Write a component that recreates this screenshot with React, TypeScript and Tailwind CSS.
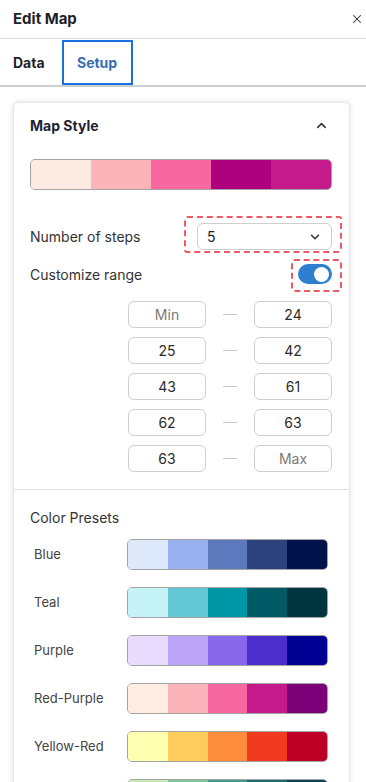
import React from 'react';
import { X, ChevronUp, ChevronDown } from 'lucide-react';

const mapStyle = ['#fdeae1', '#fbb4b9', '#f768a1', '#ae017e', '#c51b8a'];

const presets: { name: string; colors: string[] }[] = [
  { name: 'Blue', colors: ['#dde9fb', '#98b0ee', '#5c79bd', '#2c437f', '#01134b'] },
  { name: 'Teal', colors: ['#c6f3f7', '#63c7d4', '#0097a7', '#005a66', '#00343f'] },
  { name: 'Purple', colors: ['#e9dbfd', '#bba3f5', '#8768ea', '#4b2ecb', '#000093'] },
  { name: 'Red-Purple', colors: ['#feebe2', '#fbb4b9', '#f768a1', '#c51b8a', '#7a0177'] },
  { name: 'Yellow-Red', colors: ['#ffffb2', '#fecc5c', '#fd8d3c', '#f03b20', '#bd0026'] },
  { name: 'Yellow-Green', colors: ['#c7e9b4', '#7fc79a', '#41998a', '#1d6b6e', '#0c3f4f'] },
];

const ranges: [string, string][] = [
  ['Min', '24'],
  ['25', '42'],
  ['43', '61'],
  ['62', '63'],
  ['63', 'Max'],
];

function ColorBar({ colors, className }: { colors: string[]; className: string }) {
  return (
    <div className={`flex overflow-hidden rounded-[5px] border border-[#a3a3a3] ${className}`}>
      {colors.map((c, i) => (
        <div key={i} className="flex-1" style={{ backgroundColor: c }} />
      ))}
    </div>
  );
}

function RangeInput({ value }: { value: string }) {
  const placeholder = value === 'Min' || value === 'Max';
  return (
    <div
      className={`flex h-[27px] w-[78px] items-center justify-center rounded-[6px] border border-[#cfcfcf] text-[14px] ${
        placeholder ? 'text-[#7a7a7a]' : 'text-[#2b2b2b]'
      }`}
    >
      {value}
    </div>
  );
}

export default function App() {
  return (
    <div
      className="relative h-[782px] w-[366px] overflow-hidden bg-white text-[#2a2a35]"
      style={{ fontFamily: 'Inter, "Noto Sans", sans-serif' }}
    >
      {/* header */}
      <div className="flex h-[39px] items-center justify-between border-b border-[#dcdcdc] pl-[13px] pr-[2px]">
        <span className="text-[15px] font-bold text-[#1f1f28]">Edit Map</span>
        <X size={14} strokeWidth={1.8} className="text-[#333]" />
      </div>

      {/* tabs */}
      <div className="flex h-[48px] items-stretch border-b-2 border-[#cfcfcf] pl-[13px]">
        <div className="flex items-center pr-[17px] text-[14px] font-bold text-[#1f1f28]">Data</div>
        <div className="mt-[1px] flex w-[71px] items-center justify-center border-2 border-[#1a72e0] text-[14px] font-bold text-[#356fb5]">
          Setup
        </div>
      </div>

      {/* content */}
      <div className="flex h-[700px]">
        <div className="flex-1 pl-[13px] pr-[14px] pt-[15px]">
          <div className="rounded-[5px] border border-[#e6e6e6] bg-white shadow-[0_0_5px_rgba(0,0,0,0.12)]">
            {/* map style */}
            <div className="relative border-b border-[#e2e2e2] pb-[17px] pl-[16px] pr-[17px] pt-[12px]">
              <div className="flex h-[20px] items-center justify-between">
                <span className="text-[14px] font-bold text-[#1f1f35]">Map Style</span>
                <ChevronUp size={15} strokeWidth={2.4} className="mr-[3px] text-[#333]" />
              </div>
              <ColorBar colors={mapStyle} className="mt-[24px] h-[31px]" />

              <div className="mt-[33px] flex h-[27px] items-center justify-between">
                <span className="text-[14px] text-[#333]">Number of steps</span>
                <div className="flex h-[27px] w-[135px] items-center justify-between rounded-[6px] border border-[#cfcfcf] pl-[9px] pr-[9px] text-[14px] text-[#222]">
                  <span>5</span>
                  <ChevronDown size={14} strokeWidth={2.6} className="text-[#333]" />
                </div>
              </div>

              <div className="mt-[14px] flex h-[20px] items-center justify-between">
                <span className="text-[14px] text-[#333]">Customize range</span>
                <div className="flex h-[20px] w-[34px] items-center justify-end rounded-full bg-[#2f7fd0] pr-[3px]">
                  <div className="h-[15px] w-[15px] rounded-full bg-white" />
                </div>
              </div>

              <div className="mt-[17px] flex flex-col gap-[9px] pl-[98px]">
                {ranges.map(([a, b], i) => (
                  <div key={i} className="flex items-center">
                    <RangeInput value={a} />
                    <div className="mx-[17px] h-px w-[14px] bg-[#c8c8c8]" />
                    <RangeInput value={b} />
                  </div>
                ))}
              </div>

              {/* annotations */}
              <div className="pointer-events-none absolute left-[170px] top-[113px] h-[37px] w-[158px] rounded-[3px] border-2 border-dashed border-[#ec5a68]" />
              <div className="pointer-events-none absolute left-[277px] top-[156px] h-[33px] w-[51px] rounded-[3px] border-2 border-dashed border-[#ec5a68]" />
            </div>

            {/* color presets */}
            <div className="pb-[20px] pl-[16px] pr-[21px] pt-[17px]">
              <div className="text-[14px] text-[#333]">Color Presets</div>
              <div className="mt-[11px] flex flex-col gap-[17px]">
                {presets.map((p) => (
                  <div key={p.name} className="flex items-center justify-between pl-[4px]">
                    <span className="text-[13px] text-[#444]">{p.name}</span>
                    <ColorBar colors={p.colors} className="h-[31px] w-[201px]" />
                  </div>
                ))}
              </div>
            </div>
          </div>
        </div>
        <div className="mr-[2px] w-px bg-[#e4e4e4]" />
      </div>
    </div>
  );
}
